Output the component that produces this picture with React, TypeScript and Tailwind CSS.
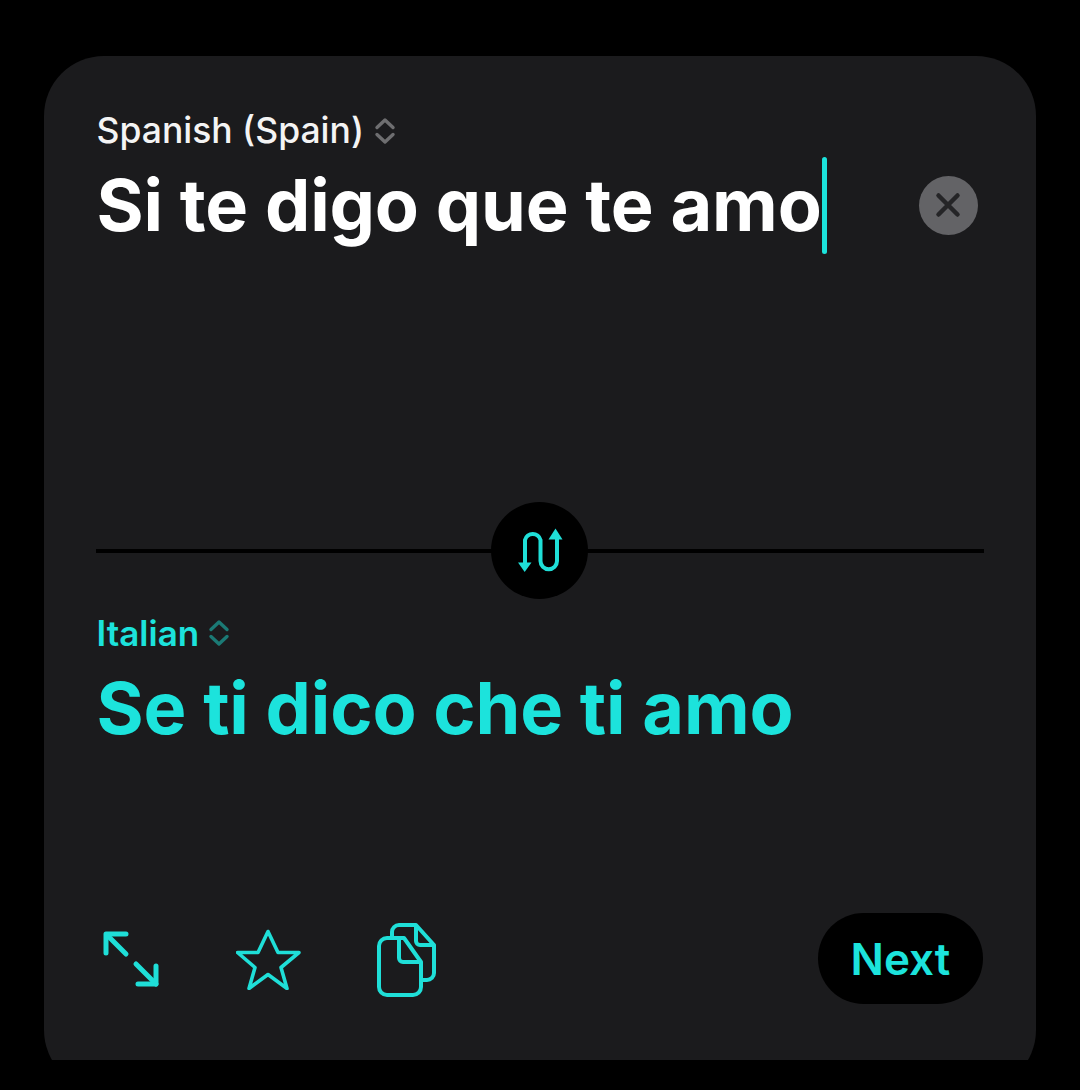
export default function App() {
  const font = { fontFamily: "Inter, sans-serif" };
  return (
    <div className="w-[1080px] h-[1090px] bg-black pt-[56px] px-[44px] overflow-hidden" style={font}>
      <div className="h-[1004px] overflow-hidden">
        <div className="h-[1034px] rounded-[60px] bg-[#1b1b1d] pl-[52.500px] pr-[53px] pt-[55px] flex flex-col">
          <div className="flex items-center h-[40px] gap-[10px]">
            <span className="text-[35.5px] font-medium leading-[40px] text-[#f4f4f4]">Spanish (Spain)</span>
            <svg width="22" height="28" viewBox="0 0 22 28" fill="none" stroke="#6e6e70" strokeWidth="3.4" strokeLinecap="round" strokeLinejoin="round"><path d="M3 10.500 11 3l8 7.500" /><path d="M3 17.500 11 25l8-7.500" /></svg>
          </div>
          <div className="flex items-center mt-[6px] h-[96px]">
            <div className="flex items-center w-[770px]">
              <span className="text-[72px] font-bold leading-[96px] text-white tracking-[-0.15px]">Si te digo que te amo</span>
              <span className="w-[5px] h-[97px] bg-[#1ce3dc] rounded-full" />
            </div>
            <div className="ml-[52px] w-[59px] h-[59px] rounded-full bg-[#636366] flex items-center justify-center">
              <svg width="26" height="26" viewBox="0 0 26 26" fill="none" stroke="#252527" strokeWidth="4.5" strokeLinecap="round"><path d="M3.500 3.500l19 19M22.500 3.500l-19 19" /></svg>
            </div>
          </div>
          <div className="relative h-[98px] mt-[248px] flex items-center justify-center -ml-px w-[888px]">
            <div className="absolute left-0 right-0 top-[48px] h-[4px] bg-black" />
            <div className="relative w-[97px] h-[97px] rounded-full bg-black flex items-center justify-center">
              <svg width="46" height="46" viewBox="0 0 46 46" fill="none" stroke="#1fdfd8" strokeWidth="4" strokeLinecap="round"><path d="M8 37V13a8 8 0 0 1 15.500 0v21a8 8 0 0 0 16.500 0V12" /><path d="M1 35.500h13.500L7.700 45z" fill="#1fdfd8" stroke="none" /><path d="M31.500 12.500H45.500L38.500 1.500z" fill="#1fdfd8" stroke="none" /></svg>
            </div>
          </div>
          <div className="flex items-center h-[40px] mt-[14px] gap-[9px]">
            <span className="text-[35px] font-semibold leading-[40px] text-[#1ce3dc]">Italian</span>
            <svg width="22" height="28" viewBox="0 0 22 28" fill="none" stroke="#1b7a75" strokeWidth="3.4" strokeLinecap="round" strokeLinejoin="round"><path d="M3 10.500 11 3l8 7.500" /><path d="M3 17.500 11 25l8-7.500" /></svg>
          </div>
          <div className="text-[72px] font-bold leading-[96px] text-[#1ce3dc] mt-[7px] tracking-[-0.15px]">Se ti dico che ti amo</div>
          <div className="flex items-center justify-between mt-[157px] w-[886.500px]">
            <div className="flex items-center">
              <svg className="ml-[6px]" width="58" height="58" viewBox="0 0 58 58" fill="none" stroke="#1fdfd8" strokeWidth="5" strokeLinecap="round" strokeLinejoin="round"><path d="M3 23V4h20" /><path d="M4 5l19 19" /><path d="M33 34l20 20" /><path d="M53 36v18H35" /></svg>
              <svg className="ml-[75px]" width="66" height="62" viewBox="0 0 66 62" fill="none" stroke="#1fdfd8" strokeWidth="3.600" strokeLinejoin="round"><path d="M32 3.500 42 24.500h21L45 39.500 51 60.500 32 46.500 13 60.500l6-21L1.500 24.500H22z" /></svg>
              <svg className="ml-[75px] mt-[3px]" width="60" height="74" viewBox="0 0 60 74" fill="none" stroke="#1fdfd8" strokeWidth="4" strokeLinejoin="round"><path d="M15 15V9a7 7 0 0 1 7-7h17l18 20v28a7 7 0 0 1-7 7h-6" /><path d="M39 2v16a4 4 0 0 0 4 4h14" /><path d="M2 23a8 8 0 0 1 8-8h17l17 24v25a8 8 0 0 1-8 8H10a8 8 0 0 1-8-8z" /><path d="M22 15v20a4 4 0 0 0 4 4h18" /></svg>
            </div>
            <div className="w-[165px] h-[91px] rounded-full bg-black flex items-center justify-center text-[44px] font-semibold text-[#1ce3dc]">Next</div>
          </div>
        </div>
      </div>
    </div>
  );
}
